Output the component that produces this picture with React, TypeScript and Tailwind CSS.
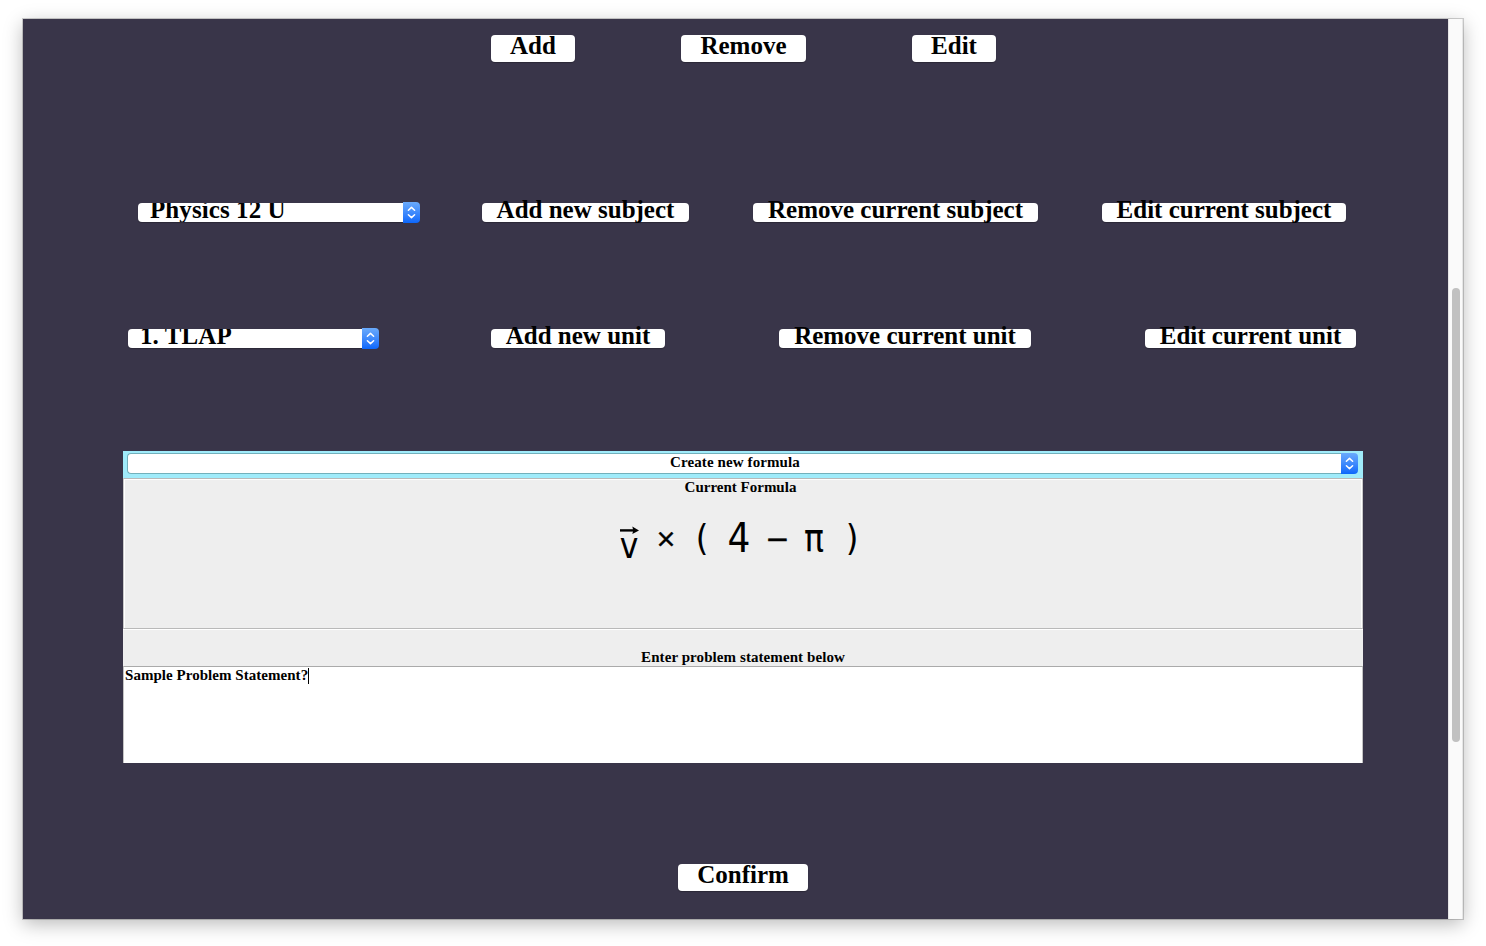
import React from "react";

const shadow = "shadow-[0_1px_1px_rgba(0,0,0,0.25)]";

function Button({ label, className }: { label: string; className: string }) {
  return (
    <button
      className={`flex shrink-0 items-start justify-center rounded-[4px] bg-white text-[25px] font-bold whitespace-nowrap ${shadow} ${className}`}
    >
      {label}
    </button>
  );
}

function Stepper({ className }: { className: string }) {
  return (
    <span
      className={`flex w-[17px] shrink-0 items-center justify-center rounded-r-[4px] bg-linear-to-b from-[#6aaafb] to-[#0a67fb] ${className}`}
    >
      <svg width="9" height="13" viewBox="0 0 9 13" fill="none" stroke="white" strokeWidth="1.5" strokeLinecap="round" strokeLinejoin="round">
        <path d="M1.4 4.3 4.5 1.4 7.6 4.3M1.4 8.7 4.5 11.6 7.6 8.7" />
      </svg>
    </span>
  );
}

function Select({ label, className }: { label: string; className: string }) {
  return (
    <div className={`flex h-[21px] shrink-0 items-center ${className}`}>
      <div className={`h-[19px] flex-1 overflow-hidden rounded-l-[4px] bg-white pl-3 text-[25px] leading-[13px] font-bold tracking-[0.08px] whitespace-nowrap ${shadow}`}>
        {label}
      </div>
      <Stepper className="h-[21px]" />
    </div>
  );
}

function Formula() {
  return (
    <div className="flex h-[70px] items-start pl-[491px] font-['DejaVu_Sans_Condensed','DejaVu_Sans',sans-serif] leading-[40px]">
      <span className="flex w-[26px] flex-col items-center pt-[29px]">
        <svg width="19" height="8" viewBox="0 0 19 8">
          <path d="M0 4.4H14" stroke="black" strokeWidth="2.4" />
          <path d="M12.3 0.4 19 4.4 12.3 8 13.3 4.4Z" fill="black" />
        </svg>
        <span className="-mt-px text-[35px] leading-[26px]">v</span>
      </span>
      <span className="w-[48px] pt-[22px] text-center font-['DejaVu_Sans',sans-serif] text-[25px] leading-[40px] [-webkit-text-stroke:0.5px_black]">×</span>
      <span className="w-[24px] pt-[21px] text-center text-[36px] leading-[40px]">(</span>
      <span className="w-[50px] pt-[21px] text-center text-[40px] leading-[40px]">4</span>
      <span className="w-[27px] pt-[22px] text-center font-['DejaVu_Sans',sans-serif] text-[29px] leading-[40px] [-webkit-text-stroke:0.5px_black]">−</span>
      <span className="w-[46px] pt-[22px] text-center text-[37px] leading-[40px]">π</span>
      <span className="w-[30px] pt-[21px] text-center text-[36px] leading-[40px]">)</span>
    </div>
  );
}

export default function App() {
  return (
    <div className="h-[946px] w-[1486px] overflow-hidden bg-white pt-[19px] pl-[23px] font-['Liberation_Serif',serif] text-black">
      <div className="flex h-[900px] w-[1440px] bg-[#393549] shadow-[0_0_0_1px_rgba(0,0,0,0.18),0_5px_18px_rgba(0,0,0,0.28)]">
        <main className="flex h-full w-[1425px] shrink-0 flex-col">
          <div className="flex pt-4 pl-[468px]">
            <Button label="Add" className="h-[27px] w-[84px] leading-[21px]" />
            <Button label="Remove" className="ml-[106px] h-[27px] w-[125px] leading-[21px]" />
            <Button label="Edit" className="ml-[106px] h-[27px] w-[84px] leading-[21px]" />
          </div>

          <div className="mt-[140px] flex items-center pl-[115px]">
            <Select label="Physics 12 U" className="w-[282px]" />
            <Button label="Add new subject" className="ml-[62px] h-[19px] w-[207px] leading-[13px]" />
            <Button label="Remove current subject" className="ml-[64px] h-[19px] w-[285px] leading-[13px]" />
            <Button label="Edit current subject" className="ml-[64px] h-[19px] w-[244px] leading-[13px]" />
          </div>

          <div className="mt-[105px] flex items-center pl-[105px]">
            <Select label="1. TLAP" className="w-[251px]" />
            <Button label="Add new unit" className="ml-[112px] h-[19px] w-[174px] leading-[13px]" />
            <Button label="Remove current unit" className="ml-[114px] h-[19px] w-[252px] leading-[13px]" />
            <Button label="Edit current unit" className="ml-[114px] h-[19px] w-[211px] leading-[13px]" />
          </div>

          <section className="mt-[102px] ml-[100px] flex h-[312px] w-[1240px] flex-col bg-[#eeeeee] text-[15px] font-bold">
            <div className="flex h-[27px] bg-[#a0ebfa] pt-[2px] pr-[5px] pl-[4px]">
              <div className="h-[21px] flex-1 rounded-l-[4px] border border-r-0 border-[#72b0bb] bg-white pl-px text-center leading-[17px] tracking-[0.1px]">
                Create new formula
              </div>
              <Stepper className="h-[21px]" />
            </div>
            <div className="h-[151px] border border-[#b9b9b9] border-x-[#c9c9c9]">
              <div className="h-full border border-b-0 border-white">
                <div className="h-[17px] pr-[5px] text-center leading-[15px]">Current Formula</div>
                <div className="font-normal">
                  <Formula />
                </div>
              </div>
            </div>
            <div className="flex h-[37px] items-end justify-center border-t border-white leading-[17px] tracking-[0.08px]">
              Enter problem statement below
            </div>
            <div className="flex flex-1 items-start border border-b-0 border-[#aaaaaa] border-x-[#c4c4c4] bg-white pl-px">
              <span className="leading-[17px] tracking-[0.04px]">Sample Problem Statement?</span>
              <span className="mt-px h-4 w-px bg-black" />
            </div>
          </section>

          <div className="flex pt-[101px] pl-[655px]">
            <Button label="Confirm" className="h-[27px] w-[130px] leading-[21px]" />
          </div>
        </main>
        <aside className="flex h-full w-[15px] justify-center border-x border-[#e6e6e6] bg-[#fafafa] pt-[269px]">
          <div className="h-[454px] w-2 rounded-full bg-[#c1c1c1]" />
        </aside>
      </div>
    </div>
  );
}
